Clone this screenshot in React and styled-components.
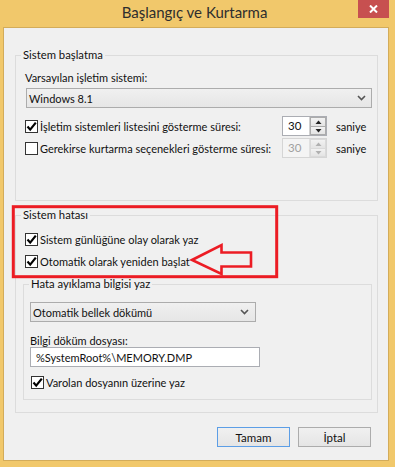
import React from "react";
import styled, { createGlobalStyle } from "styled-components";

const GlobalStyle = createGlobalStyle`
  html, body { margin: 0; padding: 0; background: #f1c86b; }
  body { font-family: Lato, "Liberation Sans", sans-serif; font-size: 11px; color: #111; }
  * { box-sizing: border-box; }
`;

const Frame = styled.div`
  position: relative;
  width: 395px;
  height: 467px;
  background: #f1c86b;
  display: flex;
  flex-direction: column;
`;

const TitleBar = styled.div`
  height: 27px;
  flex: none;
  display: grid;
  grid-template-columns: 1fr auto 1fr;
  align-items: start;
  padding-right: 6px;
`;

const Title = styled.div`
  grid-column: 2;
  font-size: 15px;
  line-height: 24px;
  color: #2e2e2e;
  white-space: nowrap;
`;

const CloseButton = styled.div`
  grid-column: 3;
  justify-self: end;
  width: 31px;
  height: 18px;
  background: #c75050;
  display: flex;
  align-items: center;
  justify-content: center;
`;

const Client = styled.div`
  flex: 1;
  margin: 0 6px 6px 3px;
  border: 1px solid #d3ac5a;
  background: #f0f0f0;
  padding: 20px 10px 13px 11px;
  display: flex;
  flex-direction: column;
`;

const Group = styled.fieldset`
  margin: ${(p) => p.$mt || 0}px 0 0 0;
  padding: 0 5px ${(p) => p.$pb}px ${(p) => (p.$pl ?? 7)}px;
  border: 1px solid #dcdcdc;
  min-width: 0;
`;

const Legend = styled.legend`
  padding: 0 2px;
  margin-left: ${(p) => p.$ml ?? -2}px;
  font-size: 11.3px;
  line-height: 14px;
  color: #111;
`;

const Label = styled.div`
  line-height: ${(p) => p.$lh || 14}px;
  margin: ${(p) => p.$mt || 0}px 0 0 ${(p) => p.$ml || 0}px;
  white-space: nowrap;
`;

const Select = styled.div`
  width: ${(p) => p.$w}px;
  height: 20px;
  margin: ${(p) => p.$mt || 0}px 0 0 ${(p) => p.$ml || 0}px;
  border: 1px solid #acacac;
  background: linear-gradient(#f0f0f0, #e6e6e6);
  display: flex;
  align-items: center;
  justify-content: space-between;
  padding: 0 ${(p) => p.$pr || 5}px 0 2px;
  white-space: nowrap;
`;

const TextBox = styled.div`
  width: 230px;
  height: 20px;
  border: 1px solid #abadb3;
  background: #fff;
  display: flex;
  align-items: center;
  padding-left: 5px;
  white-space: nowrap;
`;

const SpinRow = styled.div`
  display: grid;
  grid-template-columns: 257px 45px auto;
  align-items: center;
  height: 20px;
  margin: ${(p) => p.$mt || 0}px 0 0 2px;
`;

const Saniye = styled.span`
  padding-left: 9px;
`;

const CheckRow = styled.label`
  display: flex;
  align-items: center;
  gap: 2px;
  height: 16px;
  margin: ${(p) => p.$mt || 0}px 0 0 ${(p) => p.$ml ?? 2}px;
  white-space: nowrap;
`;

const Box = styled.span`
  width: 13px;
  height: 13px;
  flex: none;
  border: 1px solid #333;
  background: #fff;
  display: flex;
  align-items: center;
  justify-content: center;
`;

const Spin = styled.div`
  width: 45px;
  height: 20px;
  display: flex;
  border: 1px solid ${(p) => (p.$disabled ? "#d5d5d5" : "#abadb3")};
  background: ${(p) => (p.$disabled ? "#f4f4f4" : "#fff")};
  color: ${(p) => (p.$disabled ? "#a0a0a0" : "#111")};
  font-size: 11.5px;
`;

const SpinValue = styled.span`
  flex: 1;
  padding-left: 5px;
  line-height: 18px;
`;

const SpinButtons = styled.div`
  width: 17px;
  display: grid;
  grid-template-rows: 1fr 1fr;
  border-left: 1px solid ${(p) => (p.$disabled ? "#e0e0e0" : "#d0d0d0")};
`;

const SpinBtn = styled.div`
  display: flex;
  align-items: center;
  justify-content: center;
  border: 1px solid ${(p) => (p.$disabled ? "#dadada" : "#acacac")};
  ${(p) => (p.$top ? "border-bottom-width: 0;" : "")}
  background: linear-gradient(#f2f2f2, #e4e4e4);
`;

const ButtonRow = styled.div`
  margin-top: auto;
  margin-right: 7px;
  display: flex;
  justify-content: flex-end;
  gap: 8px;
`;

const Button = styled.button`
  width: 73px;
  height: 20px;
  padding: 0;
  font-family: inherit;
  font-size: 11.5px;
  color: #111;
  border: 1px solid ${(p) => (p.$primary ? "#5c9ee6" : "#acacac")};
  background: linear-gradient(#f0f0f0, #e5e5e5);
`;

const Annotation = styled.svg`
  position: absolute;
  left: 0;
  top: 0;
  pointer-events: none;
`;

const Check = () => (
  <svg width="11" height="11" viewBox="0 0 11 11">
    <path d="M1.5 5.5 L4.2 8.6 L9.8 1.6" fill="none" stroke="#000" strokeWidth="2.2" />
  </svg>
);

const CheckBox = ({ checked, children, ...rest }) => (
  <CheckRow {...rest}>
    <Box>{checked && <Check />}</Box>
    <span>{children}</span>
  </CheckRow>
);

const Chevron = () => (
  <svg width="9" height="6" viewBox="0 0 9 6">
    <path d="M1 1 L4.5 4.5 L8 1" fill="none" stroke="#555" strokeWidth="1.6" />
  </svg>
);

const Tri = ({ up, color }) => (
  <svg width="7" height="4" viewBox="0 0 7 4">
    <path d={up ? "M0.5 4 L3.5 0.5 L6.5 4 Z" : "M0.5 0 L3.5 3.5 L6.5 0 Z"} fill={color} />
  </svg>
);

const SpinBox = ({ value, disabled }) => {
  const c = disabled ? "#b0b0b0" : "#222";
  return (
    <Spin $disabled={disabled}>
      <SpinValue>{value}</SpinValue>
      <SpinButtons $disabled={disabled}>
        <SpinBtn $top $disabled={disabled}>
          <Tri up color={c} />
        </SpinBtn>
        <SpinBtn $disabled={disabled}>
          <Tri color={c} />
        </SpinBtn>
      </SpinButtons>
    </Spin>
  );
};

export default function App() {
  return (
    <>
      <GlobalStyle />
      <Frame>
        <TitleBar>
          <Title>Başlangıç ve Kurtarma</Title>
          <CloseButton>
            <svg width="9" height="8" viewBox="0 0 9 8">
              <path d="M1 0.5 L8 7.5 M8 0.5 L1 7.5" stroke="#fff" strokeWidth="2" />
            </svg>
          </CloseButton>
        </TitleBar>
        <Client>
          <Group $pb={42}>
            <Legend>Sistem başlatma</Legend>
            <Label $mt={9} $ml={2}>Varsayılan işletim sistemi:</Label>
            <Select $w={346} $mt={3} $ml={3}>
              <span>Windows 8.1</span>
              <Chevron />
            </Select>
            <SpinRow $mt={8}>
              <CheckBox checked $ml={0}>İşletim sistemleri listesini gösterme süresi:</CheckBox>
              <SpinBox value="30" />
              <Saniye>saniye</Saniye>
            </SpinRow>
            <SpinRow $mt={2}>
              <CheckBox $ml={0}>Gerekirse kurtarma seçenekleri gösterme süresi:</CheckBox>
              <SpinBox value="30" disabled />
              <Saniye>saniye</Saniye>
            </SpinRow>
          </Group>
          <Group $mt={7} $pb={12}>
            <Legend>Sistem hatası</Legend>
            <CheckBox checked $mt={9}>Sistem günlüğüne olay olarak yaz</CheckBox>
            <CheckBox checked $mt={6}>Otomatik olarak yeniden başlat</CheckBox>
            <Group $mt={8} $pb={9} $pl={6}>
              <Legend $ml={-1}>Hata ayıklama bilgisi yaz</Legend>
              <Select $w={226} $mt={11} $pr={6}>
                <span>Otomatik bellek dökümü</span>
                <Chevron />
              </Select>
              <Label $mt={13} $lh={12}>Bilgi döküm dosyası:</Label>
              <TextBox>%SystemRoot%\MEMORY.DMP</TextBox>
              <CheckBox checked $mt={7} $ml={1}>Varolan dosyanın üzerine yaz</CheckBox>
            </Group>
          </Group>
          <ButtonRow>
            <Button $primary>Tamam</Button>
            <Button>İptal</Button>
          </ButtonRow>
        </Client>
        <Annotation width="395" height="467" viewBox="0 0 395 467">
          <rect x="13.3" y="206.7" width="263.4" height="70" fill="none" stroke="#ec1c24" strokeWidth="3" />
          <path
            d="M192 260 L221.5 245 L221.5 252.5 L251 252.5 L251 266.5 L221.5 266.5 L221.5 274 Z"
            fill="none"
            stroke="#ec1c24"
            strokeWidth="2.6"
            strokeLinejoin="miter"
          />
        </Annotation>
      </Frame>
    </>
  );
}
